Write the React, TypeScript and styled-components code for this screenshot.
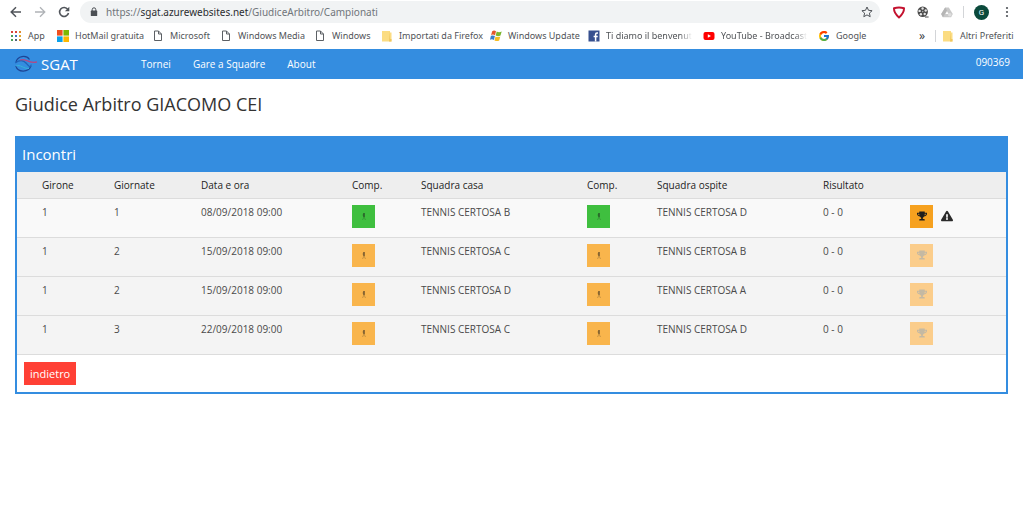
import React from "react";
import styled, { createGlobalStyle, css } from "styled-components";
import { FaTrophy, FaExclamationTriangle } from "react-icons/fa";
import { FcGoogle } from "react-icons/fc";

const chromeFont = `Roboto, "Open Sans", sans-serif`;
const pageFont = `"Open Sans", "Noto Sans", sans-serif`;

const GlobalStyle = createGlobalStyle`
  *, *::before, *::after { box-sizing: border-box; }
  body { margin: 0; background: #fff; font-family: ${pageFont}; color: #1d1d1d; }
  button, input { font: inherit; }
  a { color: inherit; text-decoration: none; }
  svg { display: block; flex: none; }
`;

/* Browser frame */

const Toolbar = styled.header`
  display: flex;
  align-items: center;
  height: 24px;
  padding: 0 4px;
  font-family: ${chromeFont};
`;

const ToolButton = styled.button`
  display: flex;
  align-items: center;
  justify-content: center;
  flex: none;
  width: 24px;
  height: 20px;
  padding: 0;
  border: 0;
  background: none;
  color: #50545a;
`;

const ToolGroup = styled.div`
  display: flex;
  align-items: center;
  flex: none;
`;

const Omnibox = styled.div`
  display: flex;
  align-items: center;
  flex: 1;
  height: 22px;
  margin: 0 7px 0 4px;
  padding: 0 1px 0 10px;
  gap: 8px;
  border-radius: 11px;
  background: #f1f3f4;
`;

const Address = styled.a`
  flex: 1;
  font-family: "Noto Sans", sans-serif;
  font-size: 10px;
  line-height: 16px;
  color: #70757a;
  white-space: nowrap;
`;

const Host = styled.span`
  color: #2b2d30;
`;

const Divider = styled.span`
  width: 1px;
  height: 12px;
  margin-left: 4px;
  background: #d3d5d8;
`;

const Avatar = styled.button`
  width: 15px;
  height: 15px;
  margin: 0 6px 0 10px;
  padding: 0;
  border: 0;
  border-radius: 50%;
  background: #0b4a3c;
  color: #fff;
  font-size: 8px;
  line-height: 15px;
  text-align: center;
`;

const Bookmarks = styled.nav`
  display: flex;
  align-items: center;
  height: 25px;
  padding: 0 10px 1px;
  font-family: "Noto Sans", sans-serif;
  font-size: 9px;
  line-height: 14px;
  color: #505357;
`;

const Bookmark = styled.a<{ $width: number }>`
  display: flex;
  align-items: center;
  flex: none;
  gap: 6px;
  width: ${(p) => p.$width}px;
  white-space: nowrap;
`;

const BookmarkLabel = styled.span<{ $faded?: boolean }>`
  ${(p) =>
    p.$faded &&
    css`
      mask-image: linear-gradient(to right, #000 86%, transparent);
    `}
`;

const BookmarkEnd = styled.div`
  display: flex;
  align-items: center;
  gap: 6px;
  margin-left: auto;
`;

const MoreButton = styled.button`
  padding: 0;
  border: 0;
  background: none;
  color: #3c4043;
  font-size: 12px;
  line-height: 14px;
`;

/* Page */

const NavBar = styled.nav`
  display: flex;
  align-items: center;
  height: 30px;
  padding: 0 13px 0 14px;
  background: #348de0;
  color: #fff;
`;

const Brand = styled.a`
  display: flex;
  align-items: center;
  gap: 3px;
  width: 127px;
  font-size: 15px;
  line-height: 20px;
`;

const NavLinks = styled.div`
  display: flex;
  flex: 1;
  gap: 22px;
  font-size: 10px;
  font-weight: 500;
  line-height: 16px;
`;

const UserCode = styled.a`
  align-self: flex-start;
  padding-top: 5px;
  font-size: 10px;
  line-height: 16px;
`;

const Main = styled.main`
  padding: 0 15px;
`;

const Title = styled.h1`
  margin: 0;
  padding: 12px 0 19px;
  font-size: 18px;
  line-height: 26px;
  font-weight: 400;
  color: #333;
`;

const Panel = styled.section`
  border: 2px solid #348de0;
`;

const PanelTitle = styled.h2`
  margin: 0;
  padding: 5px 5px 7px;
  background: #348de0;
  color: #fff;
  font-size: 15px;
  line-height: 22px;
  font-weight: 400;
`;

const Table = styled.table`
  width: 100%;
  table-layout: fixed;
  border-collapse: collapse;
  font-size: 10px;
  line-height: 14px;
`;

const Column = styled.col<{ $width: number }>`
  width: ${(p) => p.$width}px;
`;

const HeadRow = styled.tr`
  height: 26px;
  background: #eeeeee;
  border-bottom: 1px solid #dcdcdc;
`;

const HeadCell = styled.th`
  padding: 0 8px;
  text-align: left;
  font-weight: 500;
  &:first-child { padding-left: 25px; }
`;

const Row = styled.tr<{ $first: boolean }>`
  height: 39px;
  background: ${(p) => (p.$first ? "#f9f9f9" : "#f4f4f4")};
  border-bottom: 1px solid #dcdcdc;
`;

const Cell = styled.td`
  padding: 6px 8px 0;
  vertical-align: top;
  color: #4a4a4a;
  &:first-child { padding-left: 25px; }
`;

const Actions = styled.div`
  display: flex;
  align-items: center;
  gap: 8px;
`;

const SquareButton = styled.button<{ $color: string }>`
  display: flex;
  align-items: center;
  justify-content: center;
  width: 23px;
  height: 23px;
  padding: 0;
  border: 0;
  background: ${(p) => p.$color};
  color: #1d1d1d;
  &:disabled { background: #fbcd8b; color: #c4b9a3; }
`;

const PanelFooter = styled.div`
  padding: 7px;
`;

const BackButton = styled.button`
  display: block;
  height: 23px;
  padding: 0 6px;
  border: 0;
  background: #ff4035;
  color: #fff;
  font-size: 11px;
  line-height: 23px;
`;

/* Drawings */

const BackArrow = ({ color }: { color: string }) => (
  <svg width="12" height="12" viewBox="0 0 12 12" fill="none" stroke={color} strokeWidth="1.5">
    <path d="M11 6H1.5M6 1.2L1.2 6L6 10.8" />
  </svg>
);

const ForwardArrow = ({ color }: { color: string }) => (
  <svg width="12" height="12" viewBox="0 0 12 12" fill="none" stroke={color} strokeWidth="1.3">
    <path d="M1 6h9.5M6 1.2L10.8 6L6 10.8" />
  </svg>
);

const Reload = () => (
  <svg width="12" height="12" viewBox="0 0 12 12">
    <path d="M9.8 3.4A4.5 4.5 0 1 0 10.5 7" fill="none" stroke="#50545a" strokeWidth="1.6" />
    <path d="M11.3 0.8v4.4H6.9z" fill="#50545a" />
  </svg>
);

const Lock = () => (
  <svg width="8" height="10" viewBox="0 0 8 10">
    <rect x="0.8" y="3.6" width="6.4" height="5.4" rx="0.6" fill="#4b4f54" />
    <path d="M2.2 4V2.6a1.8 1.8 0 0 1 3.6 0V4" fill="none" stroke="#4b4f54" strokeWidth="1" />
  </svg>
);

const Star = () => (
  <svg width="12" height="12" viewBox="0 0 12 12">
    <path d="M6 1l1.500 3.300 3.600.400-2.700 2.400.800 3.600L6 8.900l-3.200 1.800.800-3.600L.900 4.700l3.600-.400z" fill="none" stroke="#4f5358" strokeWidth="1" strokeLinejoin="round" />
  </svg>
);

const Shield = () => (
  <svg width="14" height="13" viewBox="0 0 14 13">
    <path d="M2 2.200Q7 0.800 12 2.200Q12.200 7 7 11.400Q1.800 7 2 2.200z" fill="#fff" stroke="#c4122f" strokeWidth="2" strokeLinejoin="round" />
  </svg>
);

const Reel = () => (
  <svg width="12" height="12" viewBox="0 0 12 12">
    <circle cx="5.700" cy="5.800" r="5.200" fill="#4a4a4a" />
    <g fill="#e4e4e4">
      <circle cx="5.600" cy="2.500" r="1.200" />
      <circle cx="8.700" cy="4.500" r="1.200" />
      <circle cx="7.700" cy="8" r="1.200" />
      <circle cx="3.900" cy="8.200" r="1.200" />
      <circle cx="2.600" cy="4.900" r="1.200" />
    </g>
    <circle cx="5.700" cy="5.600" r="0.800" fill="#aaa" />
    <path d="M8 11h3.600" stroke="#4a4a4a" strokeWidth="1" />
  </svg>
);

const Drive = () => (
  <svg width="12" height="11" viewBox="0 0 12 11">
    <path d="M4.200 0.500h3.600L11.800 7l-1.700 3.200H1.900L0.200 7z" fill="#c9c9c9" />
    <path d="M4.200 0.500L0.200 7l1.700 3.200L6 3.500z" fill="#b5b5b5" />
    <path d="M6 4.200L7.600 7H4.400z" fill="#fff" />
    <circle cx="8.800" cy="7.800" r="1.800" fill="#dedede" />
  </svg>
);

const MenuDots = () => (
  <svg width="4" height="12" viewBox="0 0 4 12" fill="#4f5358">
    <circle cx="2" cy="2" r="1.100" />
    <circle cx="2" cy="6" r="1.100" />
    <circle cx="2" cy="10" r="1.100" />
  </svg>
);

const AppsIcon = () => {
  const colors = ["#d9443a", "#d9443a", "#e08a2c", "#4b9e57", "#4272c4", "#e0a52c", "#4b9e57", "#52627a", "#c98a2c"];
  return (
    <svg width="12" height="12" viewBox="0 0 12 12">
      {colors.map((c, i) => (
        <rect key={i} x={1 + (i % 3) * 4} y={1 + Math.floor(i / 3) * 4} width="2" height="2" fill={c} />
      ))}
    </svg>
  );
};

const MicrosoftIcon = () => (
  <svg width="12" height="12" viewBox="0 0 12 12">
    <path d="M0 0h5.600v5.600H0z" fill="#f0501f" />
    <path d="M6.400 0H12v5.600H6.400z" fill="#7db800" />
    <path d="M0 6.400h5.600V12H0z" fill="#0ba1ea" />
    <path d="M6.400 6.400H12V12H6.400z" fill="#fcb800" />
  </svg>
);

const PageIcon = () => (
  <svg width="12" height="12" viewBox="0 0 12 12" fill="none" stroke="#5c6065" strokeWidth="1">
    <path d="M2.500 1h4l3 3v6.500h-7zM6.500 1v3h3" />
  </svg>
);

const FolderIcon = () => (
  <svg width="12" height="12" viewBox="0 0 12 12">
    <path d="M1 1h8v1.500h1.500V11.500H1z" fill="#fbdc82" />
    <path d="M9 1v8h1.500v2.500H8" fill="#efc65c" />
  </svg>
);

const WindowsFlag = () => (
  <svg width="12" height="12" viewBox="0 0 12 12">
    <path d="M2.200 1.200Q4 0 6 1.200L5 5.200Q3 4 1.100 5z" fill="#e5572a" />
    <path d="M6.700 1.600Q9 2.900 11.700 1.600L10.500 5.600Q8 6.800 5.700 5.500z" fill="#7cb62f" />
    <path d="M0.900 5.800Q3 4.900 4.900 6L3.900 10Q2 8.800 0 9.800z" fill="#3a7ec9" />
    <path d="M5.500 6.400Q8 7.600 10.300 6.400L9.200 10.500Q7 11.600 4.500 10.400z" fill="#f5bd22" />
  </svg>
);

const FacebookIcon = () => (
  <svg width="12" height="12" viewBox="0 0 12 12">
    <rect x="0.500" y="0.500" width="11" height="11" fill="#37508f" />
    <path d="M10 2.900H9q-1.400 0-1.400 1.500V11.500M5.600 6.400H9.700" fill="none" stroke="#fff" strokeWidth="1.500" />
  </svg>
);

const YouTubeIcon = () => (
  <svg width="12" height="12" viewBox="0 0 12 12">
    <rect x="0.500" y="2" width="11" height="8" rx="2" fill="#f00" />
    <path d="M4.800 4.200L8 6L4.800 7.800z" fill="#fff" />
  </svg>
);

const BrandLogo = () => (
  <svg width="24" height="20" viewBox="0 0 24 20" fill="none">
    <path d="M2 8C3.500 2 12 0.500 15.500 5.500M1.800 12C4 19 14.500 18.500 17 12" stroke="#1d4596" strokeWidth="1.200" />
    <path d="M1.200 9C6 5.500 10 6.500 12.500 9.500S16.500 14.500 17.200 10.500" stroke="#1f62b8" strokeWidth="1.200" />
    <path d="M6 6C12 3.500 15 10.500 23 7.800" stroke="#b14a86" strokeWidth="1.300" />
    <path d="M2 12C6 10 10 15 15 14.500" stroke="#35b5d8" strokeWidth="1" />
  </svg>
);

const PlayerIcon = () => (
  <svg width="7" height="9" viewBox="0 0 7 9" fill="none" stroke="#1d1d1d">
    <path d="M4 1v4" strokeWidth="1.100" opacity="0.850" />
    <path d="M4 5L2.500 8M4 5l1.500 3" strokeWidth="0.500" opacity="0.450" />
    <path d="M2.300 3h1.500" strokeWidth="0.500" opacity="0.500" />
  </svg>
);

/* Data */

const bookmarks: { label: string; icon: React.ReactNode; width: number; faded?: boolean }[] = [
  { label: "App", icon: <AppsIcon />, width: 47 },
  { label: "HotMail gratuita", icon: <MicrosoftIcon />, width: 95 },
  { label: "Microsoft", icon: <PageIcon />, width: 68 },
  { label: "Windows Media", icon: <PageIcon />, width: 94 },
  { label: "Windows", icon: <PageIcon />, width: 67 },
  { label: "Importati da Firefox", icon: <FolderIcon />, width: 109 },
  { label: "Windows Update", icon: <WindowsFlag />, width: 98 },
  { label: "Ti diamo il benvenut", icon: <FacebookIcon />, width: 115, faded: true },
  { label: "YouTube - Broadcast", icon: <YouTubeIcon />, width: 115, faded: true },
  { label: "Google", icon: <FcGoogle size={12} />, width: 60 },
];

const columnWidths = [89, 87, 151, 69, 166, 70, 166, 87, 104];
const headings = ["Girone", "Giornate", "Data e ora", "Comp.", "Squadra casa", "Comp.", "Squadra ospite", "Risultato", ""];

const matches = [
  { round: 1, day: 1, date: "08/09/2018 09:00", home: "TENNIS CERTOSA B", away: "TENNIS CERTOSA D", open: true },
  { round: 1, day: 2, date: "15/09/2018 09:00", home: "TENNIS CERTOSA C", away: "TENNIS CERTOSA B", open: false },
  { round: 1, day: 2, date: "15/09/2018 09:00", home: "TENNIS CERTOSA D", away: "TENNIS CERTOSA A", open: false },
  { round: 1, day: 3, date: "22/09/2018 09:00", home: "TENNIS CERTOSA C", away: "TENNIS CERTOSA D", open: false },
];

export default function App() {
  return (
    <>
      <GlobalStyle />
      <Toolbar>
        <ToolGroup>
          <ToolButton aria-label="Indietro"><BackArrow color="#50545a" /></ToolButton>
          <ToolButton aria-label="Avanti"><ForwardArrow color="#b0b3b7" /></ToolButton>
          <ToolButton aria-label="Ricarica"><Reload /></ToolButton>
        </ToolGroup>
        <Omnibox>
          <Lock />
          <Address href="#">
            https://<Host>sgat.azurewebsites.net</Host>/GiudiceArbitro/Campionati
          </Address>
          <ToolButton aria-label="Preferiti"><Star /></ToolButton>
        </Omnibox>
        <ToolGroup>
          <ToolButton aria-label="Protezione"><Shield /></ToolButton>
          <ToolButton aria-label="Video"><Reel /></ToolButton>
          <ToolButton aria-label="Drive"><Drive /></ToolButton>
          <Divider />
          <Avatar aria-label="Profilo">G</Avatar>
          <ToolButton aria-label="Menu"><MenuDots /></ToolButton>
        </ToolGroup>
      </Toolbar>
      <Bookmarks aria-label="Preferiti">
        {bookmarks.map((b) => (
          <Bookmark key={b.label} href="#" $width={b.width}>
            {b.icon}
            <BookmarkLabel $faded={b.faded}>{b.label}</BookmarkLabel>
          </Bookmark>
        ))}
        <BookmarkEnd>
          <MoreButton aria-label="Altri">»</MoreButton>
          <Divider />
          <Bookmark href="#" $width={71}>
            <FolderIcon />
            <BookmarkLabel>Altri Preferiti</BookmarkLabel>
          </Bookmark>
        </BookmarkEnd>
      </Bookmarks>

      <NavBar>
        <Brand href="#"><BrandLogo />SGAT</Brand>
        <NavLinks>
          <a href="#">Tornei</a>
          <a href="#">Gare a Squadre</a>
          <a href="#">About</a>
        </NavLinks>
        <UserCode href="#">090369</UserCode>
      </NavBar>
      <Main>
        <Title>Giudice Arbitro GIACOMO CEI</Title>
        <Panel>
          <PanelTitle>Incontri</PanelTitle>
          <Table>
            <colgroup>
              {columnWidths.map((w, i) => <Column key={i} $width={w} />)}
            </colgroup>
            <thead>
              <HeadRow>
                {headings.map((h, i) => <HeadCell key={i} scope="col">{h}</HeadCell>)}
              </HeadRow>
            </thead>
            <tbody>
              {matches.map((m, i) => {
                const color = m.open ? "#3fbf3f" : "#f9b54c";
                return (
                  <Row key={i} $first={m.open}>
                    <Cell>{m.round}</Cell>
                    <Cell>{m.day}</Cell>
                    <Cell>{m.date}</Cell>
                    <Cell><SquareButton $color={color} aria-label="Composizione casa"><PlayerIcon /></SquareButton></Cell>
                    <Cell>{m.home}</Cell>
                    <Cell><SquareButton $color={color} aria-label="Composizione ospite"><PlayerIcon /></SquareButton></Cell>
                    <Cell>{m.away}</Cell>
                    <Cell>0 - 0</Cell>
                    <Cell>
                      <Actions>
                        <SquareButton $color="#f6a11f" disabled={!m.open} aria-label="Risultato"><FaTrophy size={10} /></SquareButton>
                        {m.open && <FaExclamationTriangle size={12} color="#2b2b2b" />}
                      </Actions>
                    </Cell>
                  </Row>
                );
              })}
            </tbody>
          </Table>
          <PanelFooter>
            <BackButton>indietro</BackButton>
          </PanelFooter>
        </Panel>
      </Main>
    </>
  );
}
